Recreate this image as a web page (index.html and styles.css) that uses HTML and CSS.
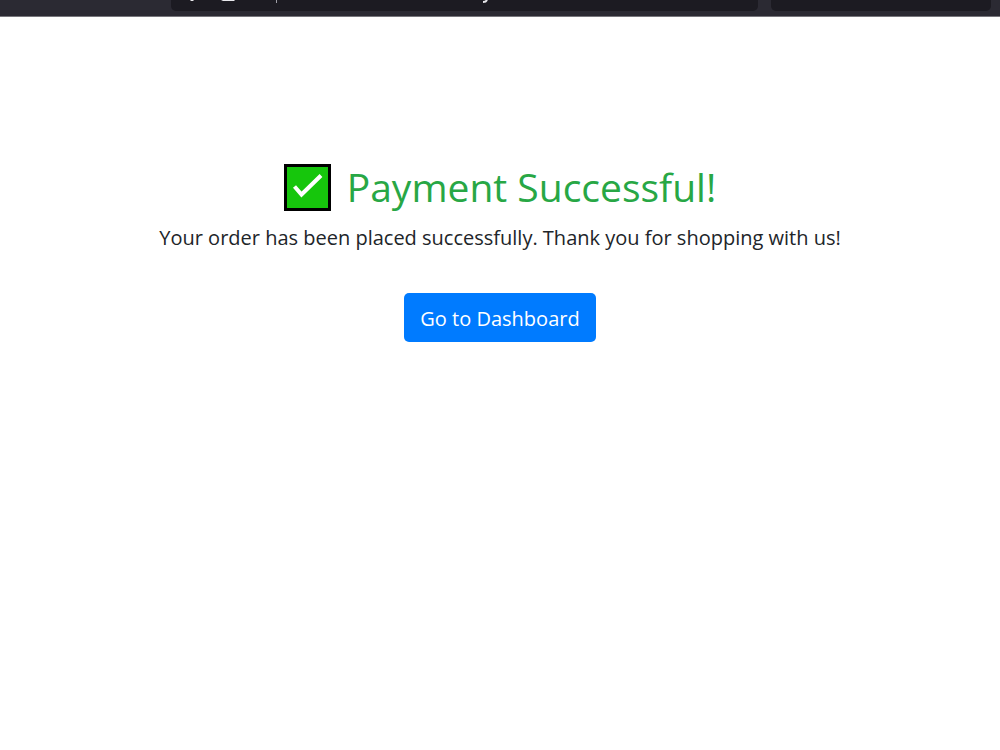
FILE: index.html
```
<!doctype html>
<html lang="en">
  <head>
    <meta charset="utf-8">
    <title>Payment Successful</title>
    <link rel="stylesheet" href="styles.css">
  </head>
  <body>
    <header class="toolbar">
      <div class="address">
        <svg class="marks" width="320" height="4" viewBox="0 0 320 4" aria-hidden="true">
          <path d="M19 0h4l-1 1h-2zM50 0h14l-1 1H52z" fill="#e8e8ec"/>
          <path d="M105 0h1v3h-1z" fill="#a0a0a8"/>
          <path d="M316 0q-1 2-4 2" fill="none" stroke="#e8e8ec" stroke-width="2"/>
        </svg>
      </div>
      <div class="search"></div>
    </header>

    <main class="container">
      <h1>
        <svg class="check" viewBox="0 0 47 47" aria-hidden="true">
          <rect width="47" height="47" fill="#000"/>
          <rect x="3" y="3" width="41" height="41" fill="#16c60c"/>
          <path d="M10.500 22.500L17.500 30.500L37 11.500" fill="none" stroke="#fff" stroke-width="4"/>
        </svg>
        <span>Payment Successful!</span>
      </h1>
      <p>Your order has been placed successfully. Thank you for shopping with us!</p>
      <a class="btn" href="#">Go to Dashboard</a>
    </main>
  </body>
</html>
```
FILE: styles.css
```
body {
  margin: 0;
  background: #fff;
  color: #212529;
  font-family: "Open Sans", "Noto Sans", sans-serif;
  font-size: 20px;
  line-height: 30px;
}

.toolbar {
  display: flex;
  gap: 13px;
  height: 17px;
  padding: 0 9px 0 171px;
  background: #2b2a33;
  border-bottom: 1px solid #77767c;
  box-sizing: border-box;
}

.address, .search {
  height: 11px;
  background: #1c1b22;
  border-radius: 0 0 5px 5px;
}

.address {
  flex: 8;
}

.search {
  flex: 3;
}

.marks {
  display: block;
}

.container {
  padding: 144px 16px 0;
  text-align: center;
}

h1 {
  display: flex;
  align-items: center;
  justify-content: center;
  gap: 16px;
  margin: 0 0 10px;
  color: #28a745;
  font-size: 39px;
  font-weight: 400;
  line-height: 52px;
}

.check {
  width: 47px;
  height: 47px;
}

p {
  margin: 0 0 40px;
}

.btn {
  display: inline-block;
  padding: 11px 16px 8px;
  background: #007bff;
  border-radius: 5px;
  color: #fff;
  text-decoration: none;
}
```
